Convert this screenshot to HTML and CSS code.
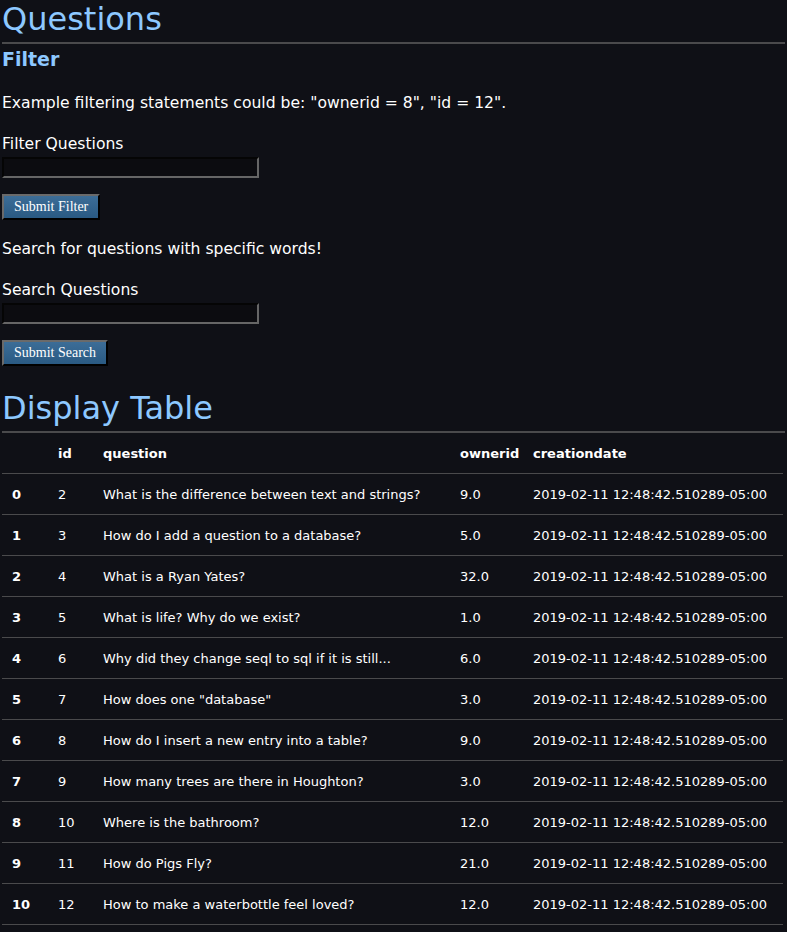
FILE: index.html
```html
<!DOCTYPE html>
<html>
<head>
<meta charset="utf-8">
<link rel="stylesheet" href="styles.css">
</head>
<body>
<h1 class="title">Questions</h1>
<h2 class="sub">Filter</h2>
<p class="text">Example filtering statements could be: "ownerid = 8", "id = 12".</p>
<form class="form">
  <label class="label">Filter Questions</label>
  <input class="field" type="text">
  <button class="btn" type="button">Submit Filter</button>
</form>
<p class="text">Search for questions with specific words!</p>
<form class="form">
  <label class="label">Search Questions</label>
  <input class="field" type="text">
  <button class="btn" type="button">Submit Search</button>
</form>
<h1 class="title tbl-title">Display Table</h1>
<table class="data">
  <colgroup>
    <col class="c-idx"><col class="c-id"><col class="c-q"><col class="c-own"><col class="c-date">
  </colgroup>
  <thead>
    <tr><th></th><th>id</th><th>question</th><th>ownerid</th><th>creationdate</th></tr>
  </thead>
  <tbody>
    <tr><th>0</th><td>2</td><td>What is the difference between text and strings?</td><td>9.0</td><td>2019-02-11 12:48:42.510289-05:00</td></tr>
    <tr><th>1</th><td>3</td><td>How do I add a question to a database?</td><td>5.0</td><td>2019-02-11 12:48:42.510289-05:00</td></tr>
    <tr><th>2</th><td>4</td><td>What is a Ryan Yates?</td><td>32.0</td><td>2019-02-11 12:48:42.510289-05:00</td></tr>
    <tr><th>3</th><td>5</td><td>What is life? Why do we exist?</td><td>1.0</td><td>2019-02-11 12:48:42.510289-05:00</td></tr>
    <tr><th>4</th><td>6</td><td>Why did they change seql to sql if it is still...</td><td>6.0</td><td>2019-02-11 12:48:42.510289-05:00</td></tr>
    <tr><th>5</th><td>7</td><td>How does one "database"</td><td>3.0</td><td>2019-02-11 12:48:42.510289-05:00</td></tr>
    <tr><th>6</th><td>8</td><td>How do I insert a new entry into a table?</td><td>9.0</td><td>2019-02-11 12:48:42.510289-05:00</td></tr>
    <tr><th>7</th><td>9</td><td>How many trees are there in Houghton?</td><td>3.0</td><td>2019-02-11 12:48:42.510289-05:00</td></tr>
    <tr><th>8</th><td>10</td><td>Where is the bathroom?</td><td>12.0</td><td>2019-02-11 12:48:42.510289-05:00</td></tr>
    <tr><th>9</th><td>11</td><td>How do Pigs Fly?</td><td>21.0</td><td>2019-02-11 12:48:42.510289-05:00</td></tr>
    <tr><th>10</th><td>12</td><td>How to make a waterbottle feel loved?</td><td>12.0</td><td>2019-02-11 12:48:42.510289-05:00</td></tr>
  </tbody>
</table>
</body>
</html>
```

FILE: styles.css
```css
html { background: #0f1016; }
body {
  margin: 0 2px;
  background: #0f1016;
  color: #ffffff;
  font-family: "DejaVu Sans", sans-serif;
}
.title {
  margin: 0;
  color: #8dc8ff;
  font-size: 32px;
  font-weight: normal;
  line-height: 38px;
  padding-bottom: 4px;
  border-bottom: 2px solid #4a4a4c;
  margin-right: -2px;
}
.sub {
  margin: 2px 0 0;
  padding-bottom: 3px;
  color: #8dc8ff;
  font-size: 19px;
  font-weight: bold;
  line-height: 26px;
}
.text {
  margin: 16px 0;
  font-size: 15.6px;
  line-height: 25px;
}
.form { margin: 0; }
.label {
  display: block;
  font-size: 15.6px;
  line-height: 25px;
}
.field {
  display: block;
  box-sizing: border-box;
  width: 257px;
  height: 21px;
  margin: 0 0 16px;
  background: #0c0c10;
  border-style: solid;
  border-width: 2px;
  border-color: #050505 #666 #666 #050505;
  padding: 0 2px;
}
.btn {
  display: block;
  box-sizing: border-box;
  height: 26px;
  margin-bottom: 17px;
  padding: 0 10px;
  font-family: "Liberation Serif", serif;
  font-size: 14px;
  color: #fff;
  background: linear-gradient(#3c6d97, #2a5a83);
  border-style: solid;
  border-width: 2px;
  border-color: #6a6a6a #000 #000 #6a6a6a;
}
.tbl-title { margin-top: 23px; }
.data {
  border-collapse: collapse;
  table-layout: fixed;
  width: 781px;
  font-size: 13px;
}
.c-idx { width: 46px; }
.c-id { width: 45px; }
.c-q { width: 357px; }
.c-own { width: 73px; }
.c-date { width: 260px; }
.data th, .data td {
  text-align: left;
  padding: 0 10px;
  height: 40px;
  border-bottom: 1px solid #4a4a4c;
  white-space: nowrap;
}
.data th { font-weight: bold; }
```
